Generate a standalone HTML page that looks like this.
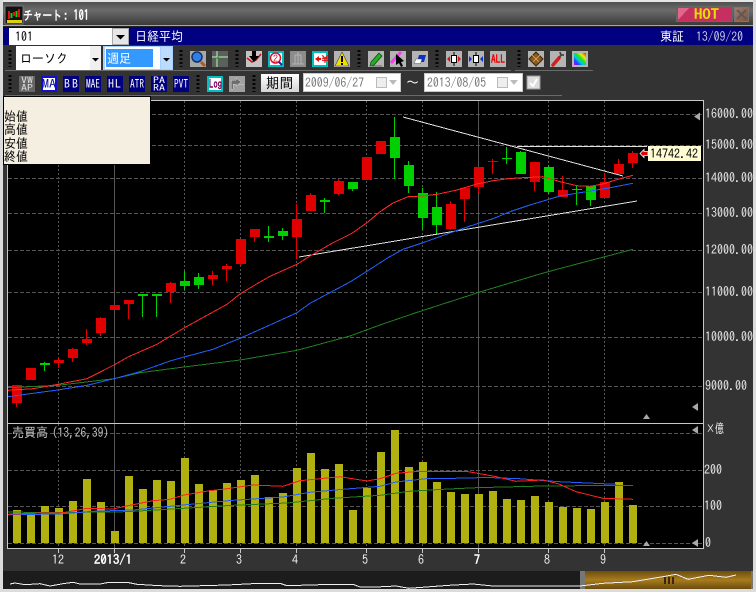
<!DOCTYPE html>
<html lang="ja"><head><meta charset="utf-8"><title>チャート: 101</title>
<style>
html,body{margin:0;padding:0;background:#333;width:756px;height:592px;overflow:hidden}
svg{display:block}
text{font-family:"IPAGothic","Liberation Mono","Noto Sans CJK JP",monospace;font-size:13px}
.c{shape-rendering:crispEdges}
.ax{fill:#e8e8e8}
.ic{fill:#fff;font-size:10px;font-weight:bold}
</style></head><body>
<svg width="756" height="592" viewBox="0 0 756 592" xmlns="http://www.w3.org/2000/svg">
<defs>
<linearGradient id="tb" x1="0" y1="0" x2="0" y2="1"><stop offset="0" stop-color="#505050"/><stop offset=".35" stop-color="#6c6c6c"/><stop offset="1" stop-color="#3a3a3a"/></linearGradient>
<linearGradient id="gold" x1="0" y1="0" x2="0" y2="1"><stop offset="0" stop-color="#6d4d10"/><stop offset=".5" stop-color="#a87c1c"/><stop offset="1" stop-color="#6a4c10"/></linearGradient>
<linearGradient id="btn" x1="0" y1="0" x2="0" y2="1"><stop offset="0" stop-color="#fff"/><stop offset="1" stop-color="#d4d4d4"/></linearGradient>
<linearGradient id="cls" x1="0" y1="0" x2="1" y2="1"><stop offset="0" stop-color="#a08070"/><stop offset="1" stop-color="#8a4e30"/></linearGradient>
<linearGradient id="rb" x1="0" y1="1" x2="1" y2="0"><stop offset="0" stop-color="#e000e0"/><stop offset=".2" stop-color="#2040ff"/><stop offset=".4" stop-color="#00d0e0"/><stop offset=".55" stop-color="#20e020"/><stop offset=".75" stop-color="#f0f000"/><stop offset="1" stop-color="#f01010"/></linearGradient>
</defs>
<rect width="756" height="592" fill="#333"/>
<!-- window frame -->
<g class="c">
<rect x="0" y="0" width="756" height="2" fill="#e6e6e6"/>
<rect x="0" y="0" width="3" height="592" fill="#dcdcdc"/>
<rect x="753" y="0" width="3" height="592" fill="#dcdcdc"/>
<rect x="0" y="589" width="756" height="3" fill="#dcdcdc"/>
<rect x="3" y="2" width="750" height="23" fill="url(#tb)"/>
<rect x="3" y="25" width="750" height="1" fill="#dca02c"/>
<rect x="3" y="26" width="750" height="1" fill="#222"/>
<rect x="3" y="27" width="750" height="18" fill="#000080"/>
</g>
<!-- title icon -->
<g class="c">
<rect x="5" y="6" width="18" height="18" fill="#111" stroke="#777"/>
<path d="M8 11h2v8H8zM13 12h2v4h-2zM18 9h2v8h-2z" fill="#e01010"/>
<path d="M10.500 13h2v5h-2zM15.500 11h2v6h-2z" fill="#10d010"/>
<path d="M7 20h15v3H7z" fill="#d8d010"/>
</g>
<text x="23" y="20" font-weight="bold" fill="#fff" style="font-size:13px" textLength="39" lengthAdjust="spacingAndGlyphs">チャート</text>
<text x="63" y="20" font-weight="bold" fill="#fff" style="font-size:14px" textLength="26" lengthAdjust="spacingAndGlyphs">: 101</text>
<!-- HOT / close -->
<g class="c">
<rect x="676.500" y="6.500" width="56" height="15" fill="#c63060" stroke="#666"/>
<path d="M678 8h11l-11 12z" fill="#e0668c"/>
<rect x="734.500" y="7.500" width="14" height="14" fill="url(#cls)" stroke="#777"/>
</g>
<path d="M737 10l9 9M746 10l-9 9" stroke="#5a5a5a" stroke-width="2"/>
<text x="694" y="19" font-weight="bold" fill="#e4e000" style="font-size:14px" textLength="25" lengthAdjust="spacingAndGlyphs">HOT</text>
<!-- symbol bar -->
<g class="c">
<rect x="9" y="28" width="103" height="17" fill="#fff"/>
<rect x="112.500" y="28.500" width="16" height="16" fill="#e6e6e6" stroke="#aaa"/>
</g>
<path d="M116 35h9l-4.500 4.500z" fill="#000"/>
<text x="15" y="41" fill="#000" textLength="18" lengthAdjust="spacingAndGlyphs">101</text>
<text x="135" y="41" fill="#fff" textLength="48" lengthAdjust="spacingAndGlyphs">日経平均</text>
<text x="660" y="41" fill="#fff" textLength="24" lengthAdjust="spacingAndGlyphs">東証</text>
<text x="696" y="41" fill="#cfcfe8" textLength="47" lengthAdjust="spacingAndGlyphs">13/09/20</text>
<!-- dropdowns -->
<g class="c">
<rect x="16" y="46" width="85" height="24" fill="#fff"/>
<rect x="90" y="46" width="11" height="24" fill="#f0f0f0"/>
<rect x="103" y="46" width="70" height="24" fill="#a8d0ff"/>
<rect x="105" y="47" width="55" height="22" fill="#fff"/>
<rect x="106" y="49" width="47" height="18" fill="#3399ff"/>
<rect x="161" y="47" width="11" height="22" fill="#bcdcff"/>
</g>
<path d="M92 58h7l-3.500 3.500z M163 58h7l-3.500 3.500z" fill="#000"/>
<text x="20" y="63" fill="#000" textLength="48" lengthAdjust="spacingAndGlyphs">ローソク</text>
<text x="107" y="63" fill="#fff" textLength="24" lengthAdjust="spacingAndGlyphs">週足</text>
<!-- grips -->
<g stroke="#050505" stroke-width="3" stroke-dasharray="2 2" fill="none" class="c">
<path d="M10 50V67M181 50V67M237 50V67M359 50V67M437 50V67M519 50V67M10 75V92M198 75V92M254 75V92"/>
</g>
<!-- separators -->
<g class="c" fill="#6a6a6a">
<rect x="5" y="70" width="506" height="1"/>
<rect x="515" y="70" width="78" height="1"/>
<rect x="5" y="95" width="557" height="1"/>
</g>
<!-- row1 icons -->
<g class="c" fill="#b4b4b4">
<rect x="190" y="51" width="16" height="16" fill="#a8a8a8"/>
<rect x="212" y="51" width="16" height="16" fill="#5e5e5e"/>
<rect x="246" y="51" width="16" height="16" fill="#c4c4c4"/>
<rect x="268" y="51" width="16" height="16" fill="#00c0c0"/>
<rect x="270" y="53" width="12" height="12" fill="#fff"/>
<rect x="290" y="51" width="16" height="16" fill="#8c8c8c"/>
<rect x="312" y="51" width="16" height="16" fill="#00c0c0"/>
<rect x="314" y="53" width="12" height="12" fill="#fff"/>
<rect x="334" y="51" width="16" height="16"/>
<rect x="368" y="51" width="16" height="16"/>
<rect x="390" y="51" width="16" height="16"/>
<rect x="412" y="51" width="16" height="16"/>
<rect x="446" y="51" width="16" height="16"/>
<rect x="468" y="51" width="16" height="16"/>
<rect x="490" y="51" width="16" height="16"/>
<rect x="528" y="51" width="16" height="16"/>
<rect x="550" y="51" width="16" height="16"/>
<rect x="572" y="51" width="16" height="16"/>
<rect x="574" y="53" width="12" height="12" fill="url(#rb)"/>
</g>
<!-- magnifier -->
<path d="M201 62l4 4" stroke="#b05a20" stroke-width="3"/>
<circle cx="197" cy="57" r="5" fill="#2f7fe8" stroke="#16306a" stroke-width="1.500"/>
<!-- grid icon -->
<path class="c" d="M212 57h16M217 51v16" stroke="#cfe8cf" fill="none"/>
<path class="c" d="M212 58h16M218 51v16" stroke="#2c7c2c" fill="none"/>
<!-- arrow chart -->
<path d="M247 58l5 4 4-2 5-6" stroke="#d01010" fill="none" stroke-width="1.500"/>
<path d="M252 51h4v5h3l-5 6-5-6h3z" fill="#000"/>
<!-- circled 2 -->
<circle cx="275.500" cy="58" r="5" fill="#fff" stroke="#e01030" stroke-width="1.500"/>
<text x="273" y="62" fill="#e01030" style="font-size:10px">2</text>
<path d="M279 62l3 3" stroke="#2020a0" stroke-width="2"/>
<!-- disabled -->
<path class="c" d="M292 64h12M295 55h6M295 55v9M301 55v9M298 52v12" stroke="#b4b4b4" fill="none"/>
<!-- yen -->
<path d="M315 59l4-3v2h2v2h-2v2z" fill="#e01010"/>
<text x="320" y="63" fill="#e01010" font-weight="bold" style="font-size:10px">¥</text>
<!-- warning -->
<path d="M342 52l7 14h-14z" fill="#f0e000" stroke="#444" stroke-width=".6"/>
<path class="c" d="M341 56h2v6h-2zM341 63h2v2h-2z" fill="#000"/>
<!-- pencil -->
<path d="M371 62l8-9 3 3-8 9-4 1z" fill="#20b020" stroke="#0b4010" stroke-width=".7"/>
<path d="M370 66h12" stroke="#666"/>
<!-- cursor -->
<path d="M391 63l10-11" stroke="#f040f0" stroke-width="3"/>
<path d="M396 54l8 7-3 1 2 4-2 1-2-4-3 2z" fill="#000"/>
<!-- eraser -->
<path d="M419 55h7l-2 7h-7z" fill="#1030c0"/>
<path d="M416 59h6l-1.500 4.500h-6.500z" fill="#fff" stroke="#333" stroke-width=".4"/>
<!-- candle arrows -->
<path class="c" d="M454 52v14M476 52v14" stroke="#000" fill="none"/>
<rect class="c" x="451.500" y="55.500" width="5" height="7" fill="#fff" stroke="#000"/>
<rect class="c" x="473.500" y="55.500" width="5" height="7" fill="#fff" stroke="#000"/>
<path d="M447 59l3-3v6zM461 59l-3-3v6z" fill="#e01010"/>
<path d="M472 59l-3-3v6zM480 59l3-3v6z" fill="#1030e0"/>
<text x="491" y="63" fill="#f00000" font-weight="bold" style="font-size:11px" textLength="14" lengthAdjust="spacingAndGlyphs">ALL</text>
<!-- cube -->
<path d="M536 52l7 7-7 7-7-7z" fill="#8a5a20" stroke="#3a2408"/>
<path d="M532 55l7 7M540 55l-7 7" stroke="#e0b060" stroke-width=".8"/>
<!-- wrench -->
<path d="M553 65l6-7" stroke="#d02020" stroke-width="3.500" stroke-linecap="round"/>
<path d="M559 58l2-3M561 55l-1-3M561 55l3 0" stroke="#444" stroke-width="1.800" fill="none"/>
<!-- row2 buttons -->
<g class="c">
<rect x="19" y="76" width="16" height="16" fill="#666"/>
<rect x="41" y="76" width="16" height="16" fill="#1010d0"/>
<rect x="43" y="78" width="12" height="12" fill="#fff"/>
<rect x="63" y="76" width="16" height="16" fill="#000080"/>
<rect x="85" y="76" width="16" height="16" fill="#000080"/>
<rect x="107" y="76" width="16" height="16" fill="#000080"/>
<rect x="129" y="76" width="16" height="16" fill="#000080"/>
<rect x="151" y="76" width="16" height="16" fill="#000080"/>
<rect x="173" y="76" width="16" height="16" fill="#000080"/>
<rect x="207" y="76" width="16" height="16" fill="#00c0c0"/>
<rect x="209" y="78" width="12" height="12" fill="#fff"/>
<rect x="229" y="76" width="16" height="16" fill="#a0a0a0"/>
</g>
<text class="ic" x="21" y="83.500" style="fill:#ddd;font-size:9px;font-weight:normal" textLength="12" lengthAdjust="spacingAndGlyphs">VW</text>
<text class="ic" x="21" y="91" style="fill:#ddd;font-size:9px;font-weight:normal" textLength="12" lengthAdjust="spacingAndGlyphs">AP</text>
<text class="ic" x="42" y="88" style="fill:#1010a0;font-size:12px;font-weight:normal" textLength="14" lengthAdjust="spacingAndGlyphs">MA</text>
<text class="ic" x="64" y="88" style="font-size:12px;font-weight:normal" textLength="14">BB</text>
<text class="ic" x="86" y="88" style="font-size:12px;font-weight:normal" textLength="14" lengthAdjust="spacingAndGlyphs">MAE</text>
<text class="ic" x="108" y="88" style="font-size:12px;font-weight:normal" textLength="13">HL</text>
<text class="ic" x="130" y="88" style="font-size:12px;font-weight:normal" textLength="14" lengthAdjust="spacingAndGlyphs">ATR</text>
<text class="ic" x="153" y="83.500" style="font-size:9px;font-weight:normal" textLength="12" lengthAdjust="spacingAndGlyphs">PA</text>
<text class="ic" x="153" y="91" style="font-size:9px;font-weight:normal" textLength="12" lengthAdjust="spacingAndGlyphs">RA</text>
<text class="ic" x="174" y="88" style="font-size:12px;font-weight:normal" textLength="14" lengthAdjust="spacingAndGlyphs">PVT</text>
<text x="209" y="88" fill="#800060" font-weight="bold" style="font-size:12px" textLength="13" lengthAdjust="spacingAndGlyphs">Log</text>
<path class="c" d="M231 89v-9h5v-2l5 4-5 4v-2h-3v5zM238 84h6" fill="#6e6e6e" stroke="#ddd" stroke-width=".4"/>
<!-- period -->
<rect class="c" x="261" y="74" width="38" height="18" fill="url(#btn)"/>
<text x="266" y="88" fill="#000" style="font-size:14px" textLength="27" lengthAdjust="spacingAndGlyphs">期間</text>
<!-- dates -->
<g class="c">
<rect x="303.500" y="73.500" width="97" height="18" fill="#fff" stroke="#c8c8c8"/>
<rect x="424.500" y="73.500" width="98" height="18" fill="#fff" stroke="#c8c8c8"/>
<rect x="376.500" y="77.500" width="10" height="10" fill="#eee" stroke="#bbb"/>
<rect x="497.500" y="77.500" width="10" height="10" fill="#eee" stroke="#bbb"/>
<rect x="527" y="76" width="13" height="13" fill="#ddd" stroke="#999"/>
</g>
<path d="M389 80h8l-4 5zM510 80h8l-4 5z" fill="#bbb"/>
<path d="M530 83l3 3 4-7" stroke="#fff" stroke-width="2" fill="none"/>
<text x="305" y="87" fill="#777" textLength="59" lengthAdjust="spacingAndGlyphs">2009/06/27</text>
<text x="427" y="87" fill="#777" textLength="59" lengthAdjust="spacingAndGlyphs">2013/08/05</text>
<text x="406" y="87" fill="#fff" style="font-size:13px">〜</text>

<!-- chart panes -->
<rect class="c" x="8" y="101" width="695" height="447" fill="#000"/>
<!-- grid -->
<g class="c" stroke="#555" fill="none">
<path stroke-dasharray="4 2" d="M8 114.500H703M8 145.500H703M8 178.500H703M8 213.500H703M8 250.500H703M8 292.500H703M8 337.500H703M8 386.500H703M8 433.500H703M8 470.500H703M8 506.500H703M8 543.500H703"/>
<path stroke-dasharray="2 2" d="M58.500 101V423M184.500 101V423M240.500 101V423M296.500 101V423M366.500 101V423M422.500 101V423M548.500 101V423M604.500 101V423M58.500 424V548M184.500 424V548M240.500 424V548M296.500 424V548M366.500 424V548M422.500 424V548M548.500 424V548M604.500 424V548"/>
<path d="M114.500 101V548M478.500 101V548"/>
</g>
<!-- candle wicks -->
<path class="c" fill="#e00000" d="M16 385h1v22h-1zM58 358h1v10h-1zM72 348h1v14h-1zM86 329h1v16h-1zM100 317h1v19h-1zM128 300h1v19h-1zM170 282h1v21h-1zM212 271h1v14h-1zM226 264h1v17h-1zM240 239h1v27h-1zM254 229h1v13h-1zM296 204h1v55h-1zM310 193h1v18h-1zM338 179h1v16h-1zM450 201h1v29h-1zM464 187h1v35h-1zM478 167h1v26h-1zM492 159h1v15h-1zM534 162h1v29h-1zM562 176h1v21h-1zM604 173h1v25h-1zM618 159h1v15h-1zM632 151h1v17h-1z"/>
<path class="c" fill="#00d000" d="M44 362h1v9h-1zM142 294h1v23h-1zM156 294h1v23h-1zM184 271h1v19h-1zM198 273h1v16h-1zM268 226h1v16h-1zM282 228h1v12h-1zM324 198h1v15h-1zM352 182h1v9h-1zM394 117h1v62h-1zM408 161h1v32h-1zM422 188h1v42h-1zM436 192h1v43h-1zM506 147h1v17h-1zM520 151h1v23h-1zM548 165h1v29h-1zM576 186h1v19h-1zM590 186h1v20h-1z"/>
<!-- candle bodies -->
<path class="c" fill="#e00000" d="M12 385h10v18h-10zM26 368h10v12h-10zM54 360h10v3h-10zM68 349h10v9h-10zM82 339h10v4h-10zM96 318h10v15h-10zM110 305h10v5h-10zM124 300h10v4h-10zM166 283h10v9h-10zM208 275h10v4h-10zM222 266h10v3h-10zM236 239h10v25h-10zM250 229h10v8h-10zM292 219h10v18h-10zM306 195h10v16h-10zM334 181h10v13h-10zM362 157h10v23h-10zM376 141h10v13h-10zM446 204h10v25h-10zM460 188h10v11h-10zM474 167h10v20h-10zM488 161h10v1h-10zM530 162h10v20h-10zM558 190h10v7h-10zM600 182h10v16h-10zM614 164h10v10h-10zM628 153h10v10h-10z"/>
<path class="c" fill="#00d000" d="M40 363h10v2h-10zM138 294h10v2h-10zM152 294h10v2h-10zM180 281h10v5h-10zM194 277h10v8h-10zM264 236h10v2h-10zM278 231h10v5h-10zM320 200h10v2h-10zM348 182h10v7h-10zM390 137h10v21h-10zM404 165h10v21h-10zM418 193h10v25h-10zM432 207h10v18h-10zM502 158h10v1h-10zM516 152h10v22h-10zM544 167h10v25h-10zM572 189h10v1h-10zM586 186h10v14h-10z"/>
<!-- trend lines -->
<g class="c" stroke="#e0e0e0" fill="none">
<path d="M403 117L623 176"/>
<path d="M299 257L637 201"/>
<path d="M517 146.500H647"/>
</g>
<!-- MAs -->
<g class="c" fill="none">
<polyline stroke="#208020" points="8,387.700 58,385.300 114,378.700 140,372.700 184,367 240,360 297,350.300 350,336 380,325 415,313 480,292 540,274 558,269 633,249.300"/>
<polyline stroke="#2060ff" points="8,396.700 33,393.300 58,390 87,385.300 114,378.700 140,371.700 170,361 184,357 213,349.300 240,338.300 270,325 297,312.700 310,303.300 333,291 350,282 370,269.300 387,258.300 403,249.300 423,242.700 447,234 470,226 493,218.700 510,211.700 530,205 560,196 580,192.700 607,188.300 633,183.300"/>
<polyline stroke="#ff2828" points="8,390.300 33,388.700 58,384.300 87,378.700 114,365 128,357 157,344.300 184,328 213,312 227,304.300 240,294 257,283.700 270,276.300 297,264.300 310,256 333,242.700 352,233.300 367,222.700 380,211.700 393,203 408,196.700 423,196 437,194.300 457,190 477,184 493,180.700 510,178.500 523,177.700 543,176.700 560,181.700 577,185.700 590,186.300 603,184 620,178.700 633,175.300"/>
</g>
<!-- volume bars -->
<path class="c" fill="#b0b010" d="M13 510h8V543h-8zM27 514h8V543h-8zM41 506h8V543h-8zM55 508h8V543h-8zM69 501h8V543h-8zM83 479h8V543h-8zM97 502h8V543h-8zM111 531h8V543h-8zM125 476h8V543h-8zM139 489h8V543h-8zM153 480h8V543h-8zM167 481h8V543h-8zM181 458h8V543h-8zM195 484h8V543h-8zM209 490h8V543h-8zM223 483h8V543h-8zM237 480h8V543h-8zM251 475h8V543h-8zM265 497h8V543h-8zM279 493h8V543h-8zM293 468h8V543h-8zM307 453h8V543h-8zM321 469h8V543h-8zM335 464h8V543h-8zM349 510h8V543h-8zM363 488h8V543h-8zM377 452h8V543h-8zM391 430h8V543h-8zM405 467h8V543h-8zM419 462h8V543h-8zM433 482h8V543h-8zM447 492h8V543h-8zM461 494h8V543h-8zM475 494h8V543h-8zM489 491h8V543h-8zM503 499h8V543h-8zM517 500h8V543h-8zM531 496h8V543h-8zM545 502h8V543h-8zM559 507h8V543h-8zM573 508h8V543h-8zM587 509h8V543h-8zM601 502h8V543h-8zM615 482h8V543h-8zM629 505h8V543h-8z"/>
<g class="c" fill="none">
<polyline stroke="#208020" points="8,512 50,512.700 127,511.700 167,509.300 233,505.300 287,503 333,498.300 380,495.300 409,491.300 443,489.300 476,487.700 543,486 633,485.300"/>
<polyline stroke="#2060ff" points="8,514.700 60,514 93,511.300 133,510 183,505 233,500.300 283,497 310,492.300 343,489.300 380,486.300 396,482 426,478.700 473,478 483,477.300 519,478.700 559,481.700 616,484.300"/>
<polyline stroke="#ff2020" points="8,514.300 33,513.300 63,512.700 73,511 87,508.300 113,509 128,505.700 153,500.700 170,499.300 184,495 210,490.700 227,488.700 253,485 283,486.300 300,480.700 340,476.700 367,481 380,478.700 396,473.300 419,471.300 466,471.300 493,476 516,481.300 543,480 559,484 576,491.700 603,498.300 633,499.300"/>
</g>
<!-- frame lines -->
<g class="c" fill="#c8c8c8">
<rect x="7" y="100" width="697" height="1"/>
<rect x="7" y="423" width="697" height="1"/>
<rect x="7" y="548" width="697" height="1"/>
<rect x="7" y="100" width="1" height="449"/>
<rect x="703" y="100" width="1" height="449"/>
</g>
<!-- ticks -->
<path class="c" stroke="#c8c8c8" d="M58.500 549v4M114.500 549v4M184.500 549v4M240.500 549v4M296.500 549v4M366.500 549v4M422.500 549v4M478.500 549v4M548.500 549v4M604.500 549v4" fill="none"/>
<!-- small triangles -->
<path d="M694 116.500l6-4v8zM692 407l6-4v8zM692 430l6-4v8zM692 543l6-4v8zM643 419l3.500-5 3.500 5zM643 546l3.500-5 3.500 5z" fill="#a8a8a8"/>
<!-- price label -->
<rect class="c" x="648" y="146" width="53" height="15" fill="#fffbd2"/>
<text x="650" y="158" fill="#000" textLength="48" lengthAdjust="spacingAndGlyphs">14742.42</text>
<path d="M640 153.500l4-4v2h4v4h-4v2z" fill="#e00000" stroke="#fff" stroke-width=".8"/>
<!-- axis labels -->
<g class="ax">
<text x="705" y="118" textLength="48" lengthAdjust="spacingAndGlyphs">16000.00</text>
<text x="705" y="149" textLength="48" lengthAdjust="spacingAndGlyphs">15000.00</text>
<text x="705" y="182" textLength="48" lengthAdjust="spacingAndGlyphs">14000.00</text>
<text x="705" y="217" textLength="48" lengthAdjust="spacingAndGlyphs">13000.00</text>
<text x="705" y="254" textLength="48" lengthAdjust="spacingAndGlyphs">12000.00</text>
<text x="705" y="296" textLength="48" lengthAdjust="spacingAndGlyphs">11000.00</text>
<text x="705" y="341" textLength="48" lengthAdjust="spacingAndGlyphs">10000.00</text>
<text x="705" y="390" textLength="42" lengthAdjust="spacingAndGlyphs">9000.00</text>
<text x="706" y="433" textLength="18" lengthAdjust="spacingAndGlyphs">×億</text>
<text x="704" y="474" textLength="18" lengthAdjust="spacingAndGlyphs">200</text>
<text x="704" y="510" textLength="18" lengthAdjust="spacingAndGlyphs">100</text>
<text x="705" y="547" textLength="6" lengthAdjust="spacingAndGlyphs">0</text>
</g>
<g fill="#f0f0f0">
<text x="52" y="564" textLength="12" lengthAdjust="spacingAndGlyphs">12</text>
<text x="94" y="564" font-weight="bold" fill="#fff" textLength="38" lengthAdjust="spacingAndGlyphs">2013/1</text>
<text x="180" y="564" textLength="6" lengthAdjust="spacingAndGlyphs">2</text>
<text x="236" y="564" textLength="6" lengthAdjust="spacingAndGlyphs">3</text>
<text x="292" y="564" textLength="6" lengthAdjust="spacingAndGlyphs">4</text>
<text x="362" y="564" textLength="6" lengthAdjust="spacingAndGlyphs">5</text>
<text x="418" y="564" textLength="6" lengthAdjust="spacingAndGlyphs">6</text>
<text x="474" y="564" font-weight="bold" fill="#fff" textLength="6" lengthAdjust="spacingAndGlyphs">7</text>
<text x="544" y="564" textLength="6" lengthAdjust="spacingAndGlyphs">8</text>
<text x="600" y="564" textLength="6" lengthAdjust="spacingAndGlyphs">9</text>
</g>
<text x="12" y="437" fill="#c8c8c8" textLength="36" lengthAdjust="spacingAndGlyphs">売買高</text>
<text x="52" y="437" fill="#c8c8c8" textLength="57" lengthAdjust="spacingAndGlyphs">(13,26,39)</text>
<!-- navigator -->
<g class="c">
<rect x="3" y="571" width="577" height="18" fill="#1c1c1c"/>
<rect x="580" y="571" width="173" height="18" fill="url(#gold)"/>
<rect x="580" y="571" width="5" height="18" fill="#777"/>
<rect x="751" y="571" width="2" height="18" fill="#777"/>
<path d="M664 577h2v7h-2zM668 577h2v7h-2zM672 577h2v7h-2z" fill="#3a2a08"/>
</g>
<polyline class="c" fill="none" stroke="#f0f0f0" points="10,584 15,583 25,584.700 40,583.700 50,586 63,583.700 73,582.300 80,584 100,584 107,582.700 127,582.300 137,584.300 160,585.700 180,586.300 227,585 260,583.300 280,583.300 287,585.700 333,584.300 353,584.300 360,587 376,587 396,586 409,588.300 449,585.300 473,584 493,586 543,586 580,586 603,583.300 633,581.700 663,576.700 676,574.300 688,579.300 709,575.300 726,577.300 736,575"/>
<!-- tooltip -->
<rect class="c" x="3.500" y="96.500" width="147" height="68" fill="#f5efe2" stroke="#000"/>
<g fill="#000">
<text x="4" y="121" textLength="24" lengthAdjust="spacingAndGlyphs">始値</text>
<text x="4" y="134" textLength="24" lengthAdjust="spacingAndGlyphs">高値</text>
<text x="4" y="148" textLength="24" lengthAdjust="spacingAndGlyphs">安値</text>
<text x="4" y="161" textLength="24" lengthAdjust="spacingAndGlyphs">終値</text>
</g>
</svg>
</body></html>
